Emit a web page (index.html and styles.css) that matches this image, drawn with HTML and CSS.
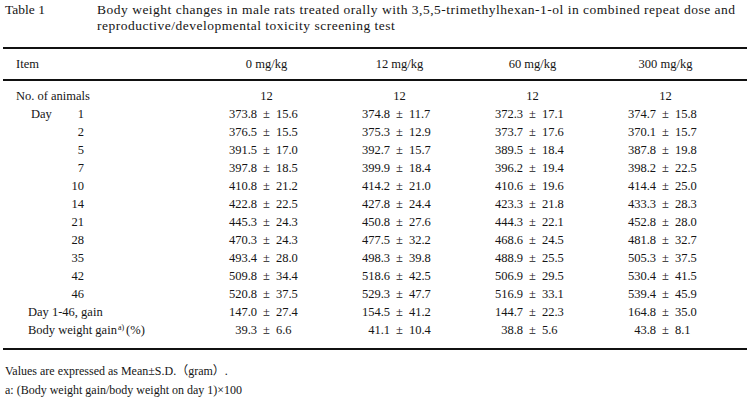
FILE: index.html
```html
<!DOCTYPE html>
<html>
<head>
<meta charset="utf-8">
<link rel="stylesheet" href="styles.css">
</head>
<body>
<div class="page">
  <div class="caption">
    <div class="cap-label">Table 1</div>
    <div class="cap-text">Body weight changes in male rats treated orally with 3,5,5-trimethylhexan-1-ol in combined repeat dose and reproductive/developmental toxicity screening test</div>
  </div>
  <div class="tbl">
    <div class="row head">
      <div class="item">Item</div>
      <div class="c">0 mg/kg</div>
      <div class="c">12 mg/kg</div>
      <div class="c">60 mg/kg</div>
      <div class="c">300 mg/kg</div>
    </div>
    <div class="body">
      <div class="row">
        <div class="item">No. of animals</div>
        <div class="c">12</div><div class="c">12</div><div class="c">12</div><div class="c">12</div>
      </div>
      <div class="row">
        <div class="item day"><span class="dlab">Day</span><span class="dnum">1</span></div>
        <div class="v"><span class="m">373.8</span><span class="pm">±</span><span class="s">15.6</span></div>
        <div class="v"><span class="m">374.8</span><span class="pm">±</span><span class="s">11.7</span></div>
        <div class="v"><span class="m">372.3</span><span class="pm">±</span><span class="s">17.1</span></div>
        <div class="v"><span class="m">374.7</span><span class="pm">±</span><span class="s">15.8</span></div>
      </div>
      <div class="row">
        <div class="item day"><span class="dlab"></span><span class="dnum">2</span></div>
        <div class="v"><span class="m">376.5</span><span class="pm">±</span><span class="s">15.5</span></div>
        <div class="v"><span class="m">375.3</span><span class="pm">±</span><span class="s">12.9</span></div>
        <div class="v"><span class="m">373.7</span><span class="pm">±</span><span class="s">17.6</span></div>
        <div class="v"><span class="m">370.1</span><span class="pm">±</span><span class="s">15.7</span></div>
      </div>
      <div class="row">
        <div class="item day"><span class="dlab"></span><span class="dnum">5</span></div>
        <div class="v"><span class="m">391.5</span><span class="pm">±</span><span class="s">17.0</span></div>
        <div class="v"><span class="m">392.7</span><span class="pm">±</span><span class="s">15.7</span></div>
        <div class="v"><span class="m">389.5</span><span class="pm">±</span><span class="s">18.4</span></div>
        <div class="v"><span class="m">387.8</span><span class="pm">±</span><span class="s">19.8</span></div>
      </div>
      <div class="row">
        <div class="item day"><span class="dlab"></span><span class="dnum">7</span></div>
        <div class="v"><span class="m">397.8</span><span class="pm">±</span><span class="s">18.5</span></div>
        <div class="v"><span class="m">399.9</span><span class="pm">±</span><span class="s">18.4</span></div>
        <div class="v"><span class="m">396.2</span><span class="pm">±</span><span class="s">19.4</span></div>
        <div class="v"><span class="m">398.2</span><span class="pm">±</span><span class="s">22.5</span></div>
      </div>
      <div class="row">
        <div class="item day"><span class="dlab"></span><span class="dnum">10</span></div>
        <div class="v"><span class="m">410.8</span><span class="pm">±</span><span class="s">21.2</span></div>
        <div class="v"><span class="m">414.2</span><span class="pm">±</span><span class="s">21.0</span></div>
        <div class="v"><span class="m">410.6</span><span class="pm">±</span><span class="s">19.6</span></div>
        <div class="v"><span class="m">414.4</span><span class="pm">±</span><span class="s">25.0</span></div>
      </div>
      <div class="row">
        <div class="item day"><span class="dlab"></span><span class="dnum">14</span></div>
        <div class="v"><span class="m">422.8</span><span class="pm">±</span><span class="s">22.5</span></div>
        <div class="v"><span class="m">427.8</span><span class="pm">±</span><span class="s">24.4</span></div>
        <div class="v"><span class="m">423.3</span><span class="pm">±</span><span class="s">21.8</span></div>
        <div class="v"><span class="m">433.3</span><span class="pm">±</span><span class="s">28.3</span></div>
      </div>
      <div class="row">
        <div class="item day"><span class="dlab"></span><span class="dnum">21</span></div>
        <div class="v"><span class="m">445.3</span><span class="pm">±</span><span class="s">24.3</span></div>
        <div class="v"><span class="m">450.8</span><span class="pm">±</span><span class="s">27.6</span></div>
        <div class="v"><span class="m">444.3</span><span class="pm">±</span><span class="s">22.1</span></div>
        <div class="v"><span class="m">452.8</span><span class="pm">±</span><span class="s">28.0</span></div>
      </div>
      <div class="row">
        <div class="item day"><span class="dlab"></span><span class="dnum">28</span></div>
        <div class="v"><span class="m">470.3</span><span class="pm">±</span><span class="s">24.3</span></div>
        <div class="v"><span class="m">477.5</span><span class="pm">±</span><span class="s">32.2</span></div>
        <div class="v"><span class="m">468.6</span><span class="pm">±</span><span class="s">24.5</span></div>
        <div class="v"><span class="m">481.8</span><span class="pm">±</span><span class="s">32.7</span></div>
      </div>
      <div class="row">
        <div class="item day"><span class="dlab"></span><span class="dnum">35</span></div>
        <div class="v"><span class="m">493.4</span><span class="pm">±</span><span class="s">28.0</span></div>
        <div class="v"><span class="m">498.3</span><span class="pm">±</span><span class="s">39.8</span></div>
        <div class="v"><span class="m">488.9</span><span class="pm">±</span><span class="s">25.5</span></div>
        <div class="v"><span class="m">505.3</span><span class="pm">±</span><span class="s">37.5</span></div>
      </div>
      <div class="row">
        <div class="item day"><span class="dlab"></span><span class="dnum">42</span></div>
        <div class="v"><span class="m">509.8</span><span class="pm">±</span><span class="s">34.4</span></div>
        <div class="v"><span class="m">518.6</span><span class="pm">±</span><span class="s">42.5</span></div>
        <div class="v"><span class="m">506.9</span><span class="pm">±</span><span class="s">29.5</span></div>
        <div class="v"><span class="m">530.4</span><span class="pm">±</span><span class="s">41.5</span></div>
      </div>
      <div class="row">
        <div class="item day"><span class="dlab"></span><span class="dnum">46</span></div>
        <div class="v"><span class="m">520.8</span><span class="pm">±</span><span class="s">37.5</span></div>
        <div class="v"><span class="m">529.3</span><span class="pm">±</span><span class="s">47.7</span></div>
        <div class="v"><span class="m">516.9</span><span class="pm">±</span><span class="s">33.1</span></div>
        <div class="v"><span class="m">539.4</span><span class="pm">±</span><span class="s">45.9</span></div>
      </div>
      <div class="row">
        <div class="item sub">Day 1-46, gain</div>
        <div class="v"><span class="m">147.0</span><span class="pm">±</span><span class="s">27.4</span></div>
        <div class="v"><span class="m">154.5</span><span class="pm">±</span><span class="s">41.2</span></div>
        <div class="v"><span class="m">144.7</span><span class="pm">±</span><span class="s">22.3</span></div>
        <div class="v"><span class="m">164.8</span><span class="pm">±</span><span class="s">35.0</span></div>
      </div>
      <div class="row">
        <div class="item sub">Body weight gain<sup class="sup">a)</sup>(%)</div>
        <div class="v"><span class="m">39.3</span><span class="pm">±</span><span class="s">6.6</span></div>
        <div class="v"><span class="m">41.1</span><span class="pm">±</span><span class="s">10.4</span></div>
        <div class="v"><span class="m">38.8</span><span class="pm">±</span><span class="s">5.6</span></div>
        <div class="v"><span class="m">43.8</span><span class="pm">±</span><span class="s">8.1</span></div>
      </div>
    </div>
  </div>
  <div class="notes">
    <div class="note">Values are expressed as Mean±S.D.（gram）.</div>
    <div class="note">a: (Body weight gain/body weight on day 1)×100</div>
  </div>
</div>
</body>
</html>
```
FILE: styles.css
```css
html, body {
  margin: 0;
  padding: 0;
  background: #ffffff;
}
body {
  font-family: "Liberation Serif", "DejaVu Serif", "Noto Sans CJK JP", serif;
  color: #151515;
  font-size: 12.5px;
}
.page {
  width: 750px;
  height: 402px;
  padding: 0 3px;
  box-sizing: border-box;
}
.caption {
  display: flex;
  font-size: 13.5px;
  line-height: 16px;
  padding-top: 2px;
}
.cap-label {
  width: 94px;
  flex: none;
  padding-left: 2px;
  box-sizing: border-box;
}
.cap-text {
  flex: 1;
  letter-spacing: 0.5px;
}
.tbl {
  margin-top: 13px;
  border-top: 2px solid #111;
  border-bottom: 2px solid #111;
}
.row {
  display: grid;
  grid-template-columns: 197px repeat(4, 133px) 1fr;
  height: 18px;
  line-height: 18px;
  align-items: center;
}
.row.head {
  height: 30px;
  line-height: 30px;
  border-bottom: 2px solid #111;
}
.body {
  padding: 6px 0 9px;
}
.item {
  padding-left: 13px;
  white-space: nowrap;
}
.item.day {
  display: flex;
  padding-left: 28px;
}
.dlab {
  width: 30px;
}
.dnum {
  width: 23px;
  text-align: right;
}
.item.sub {
  padding-left: 25px;
}
.sup {
  font-size: 8px;
  line-height: 0;
  vertical-align: 4px;
  margin: 0 2px 0 1px;
}
.c {
  text-align: center;
}
.v {
  display: grid;
  grid-template-columns: 1fr auto 1fr;
  column-gap: 6px;
  white-space: nowrap;
}
.m {
  text-align: right;
}
.pm {
  text-align: center;
}
.s {
  text-align: left;
}
.notes {
  padding-top: 12px;
  padding-left: 2px;
  font-size: 12px;
}
.note {
  line-height: 19px;
}
```
